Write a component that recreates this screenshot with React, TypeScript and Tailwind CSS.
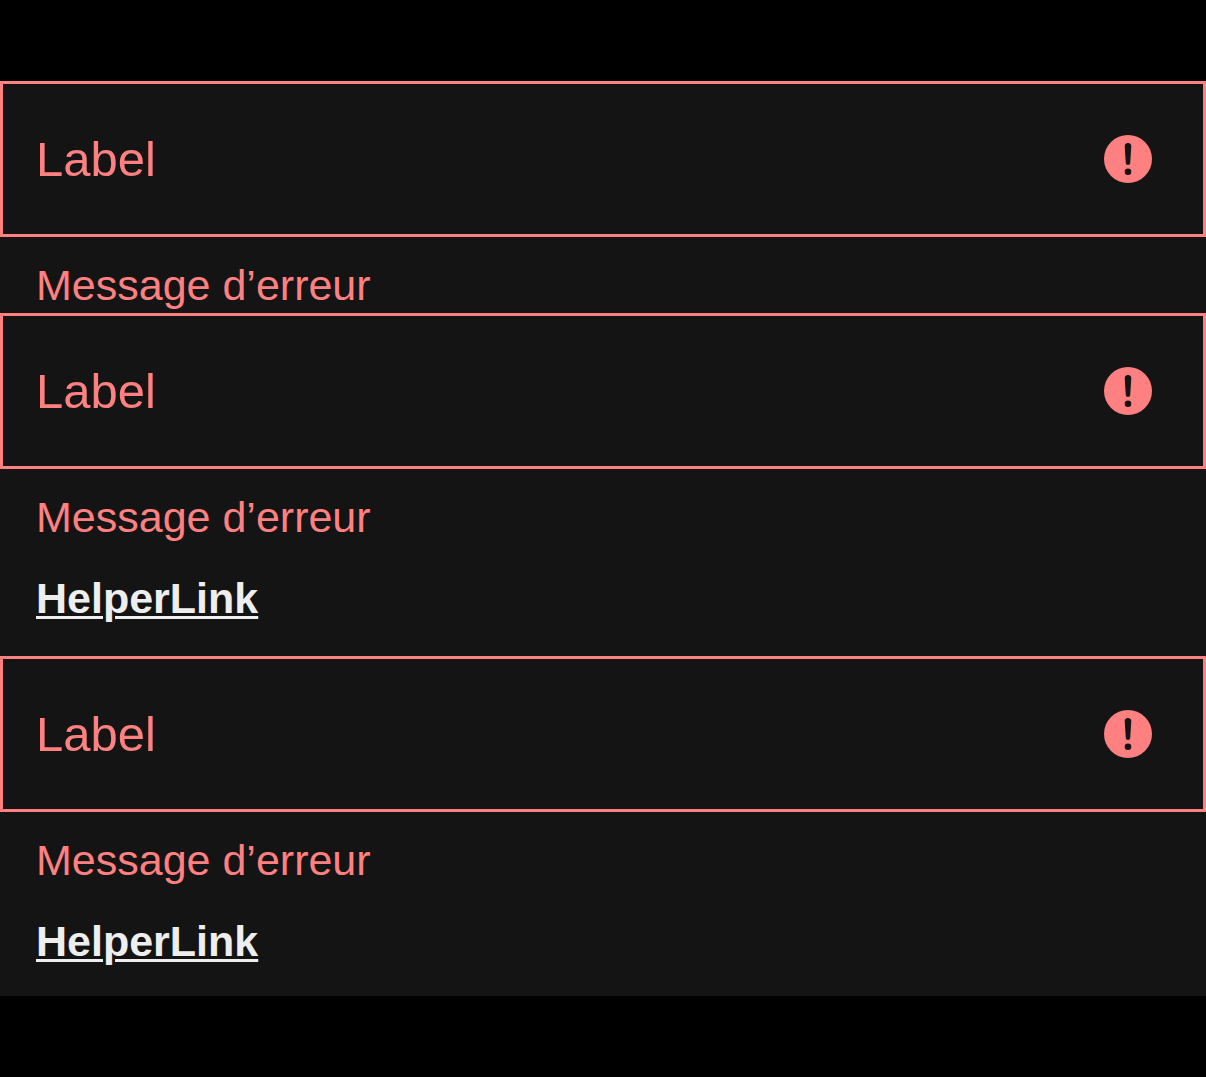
import React, { useId } from "react";

function ErrorIcon() {
  return (
    <svg className="size-12 shrink-0" viewBox="0 0 48 48" aria-hidden="true">
      <circle cx="24" cy="24" r="24" fill="#ff8080" />
      <path d="M24 8c-2.200 0-3.400 1.500-3.300 3.300l1.100 16.600c.1 1.300.9 2 2.200 2s2.100-.7 2.200-2l1.100-16.600c.1-1.800-1.100-3.300-3.300-3.300Z" fill="#141414" />
      <circle cx="24" cy="36.800" r="3.300" fill="#141414" />
    </svg>
  );
}

function Field({ link = false }: { link?: boolean }) {
  const id = useId();
  return (
    <section>
      <div className="flex h-39 items-center border-3 border-[#ff8080] pr-[51px] pl-[33px]">
        <label htmlFor={id} className="shrink-0 text-[49px] leading-[60px]">Label</label>
        <input id={id} aria-invalid="true" aria-describedby={id + "-error"} className="h-full min-w-0 flex-1 bg-transparent outline-none" />
        <ErrorIcon />
      </div>
      <p id={id + "-error"} className="px-9 pt-6 pb-px text-[43px] leading-[48px]">Message d’erreur</p>
      {link && (
        <div className="flex px-9 pt-8 pb-[31px]">
          <a href="#" className="text-[43px] leading-[48px] font-bold text-[#eeeeee] underline decoration-3 underline-offset-3">HelperLink</a>
        </div>
      )}
    </section>
  );
}

export default function App() {
  return (
    <div className="min-h-screen bg-black py-[81px] font-['Liberation_Sans',Arial,sans-serif] text-[#ff8080]">
      <main className="flex flex-col gap-[3px] bg-[#141414]">
        <Field />
        <Field link />
        <Field link />
      </main>
    </div>
  );
}
